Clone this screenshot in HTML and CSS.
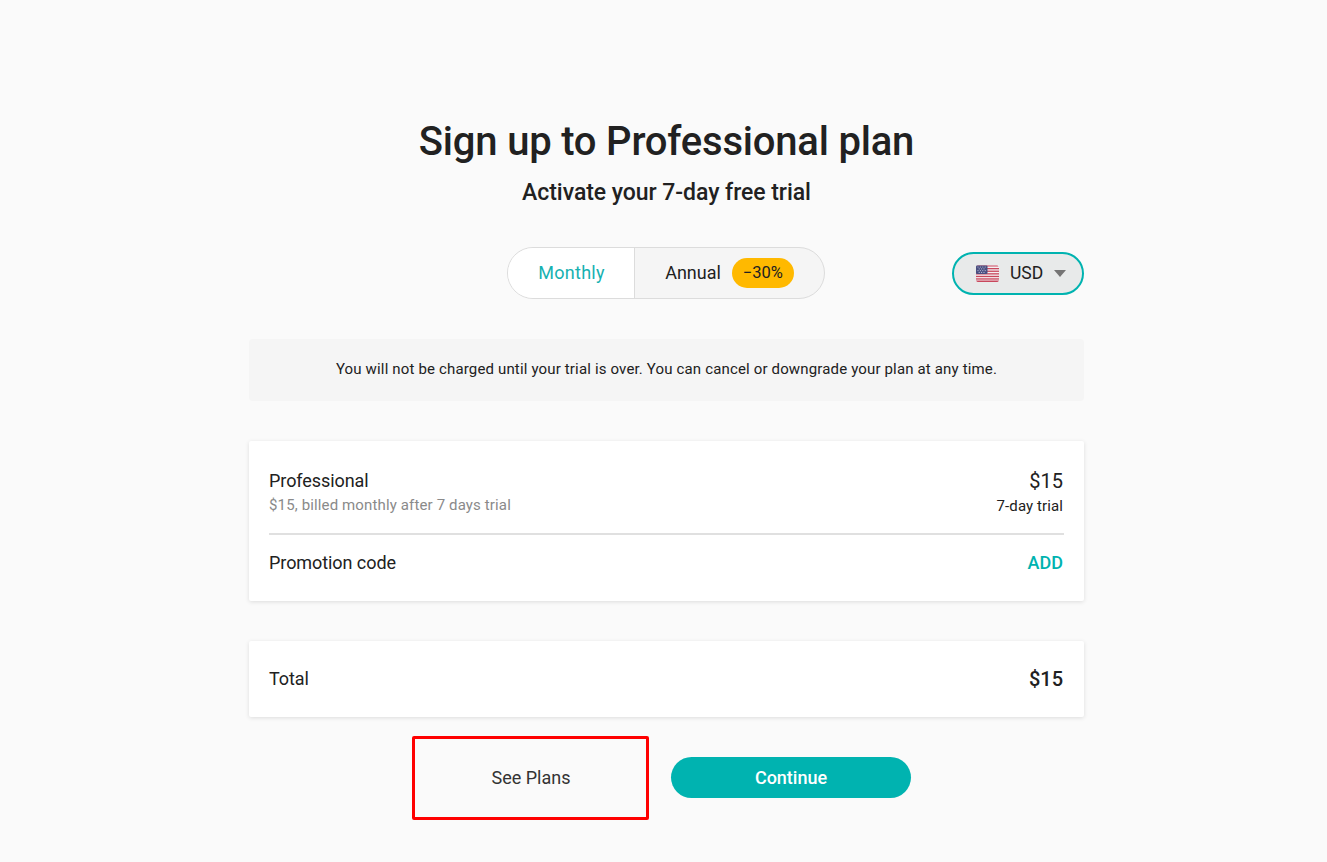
FILE: index.html
```html
<!DOCTYPE html>
<html lang="en">
<head>
<meta charset="utf-8">
<title>Sign up to Professional plan</title>
<link rel="stylesheet" href="styles.css">
</head>
<body>
<main class="page">
  <h1 class="title">Sign up to Professional plan</h1>
  <p class="subtitle">Activate your 7-day free trial</p>
  <div class="controls">
    <div class="billing">
      <div class="billing-option is-active">Monthly</div>
      <div class="billing-option">Annual <span class="discount">−30%</span></div>
    </div>
    <div class="currency">
      <svg class="flag" viewBox="0 0 23 17" width="23" height="17" aria-hidden="true">
        <rect width="23" height="17" rx="2" fill="#f4f0f2"/>
        <path d="M2 .6h19a2 2 0 0 1 1.6 .9H.4A2 2 0 0 1 2 .6z" fill="#c8475c"/>
        <rect width="23" height="1.3" y="3" fill="#c8475c"/>
        <rect width="23" height="1.3" y="5.6" fill="#c8475c"/>
        <rect width="23" height="1.3" y="8.2" fill="#c8475c"/>
        <rect width="23" height="1.3" y="10.8" fill="#c8475c"/>
        <rect width="23" height="1.3" y="13.3" fill="#c8475c"/>
        <path d="M0 15.6h23a2 2 0 0 1-2 1.4H2a2 2 0 0 1-2-1.4z" fill="#c8475c"/>
        <rect width="11.5" height="8.4" y=".6" rx="1" fill="#4a4f80"/>
        <g fill="#b9bcd6"><circle cx="2" cy="2" r=".6"/><circle cx="4.4" cy="2" r=".6"/><circle cx="6.8" cy="2" r=".6"/><circle cx="9.2" cy="2" r=".6"/><circle cx="3.2" cy="3.8" r=".6"/><circle cx="5.6" cy="3.8" r=".6"/><circle cx="8" cy="3.8" r=".6"/><circle cx="2" cy="5.6" r=".6"/><circle cx="4.4" cy="5.6" r=".6"/><circle cx="6.8" cy="5.6" r=".6"/><circle cx="9.2" cy="5.6" r=".6"/><circle cx="3.2" cy="7.4" r=".6"/><circle cx="5.6" cy="7.4" r=".6"/><circle cx="8" cy="7.4" r=".6"/></g>
      </svg>
      <span class="currency-code">USD</span>
      <span class="caret"></span>
    </div>
  </div>
  <div class="notice">You will not be charged until your trial is over. You can cancel or downgrade your plan at any time.</div>
  <section class="card card-plan">
    <div class="row plan-row">
      <div>
        <div class="row-label">Professional</div>
        <div class="row-note">$15, billed monthly after 7 days trial</div>
      </div>
      <div class="plan-price">
        <div class="price">$15</div>
        <div class="trial">7-day trial</div>
      </div>
    </div>
    <div class="row promo-row">
      <div class="row-label">Promotion code</div>
      <div class="add">ADD</div>
    </div>
  </section>
  <section class="card card-total">
    <div class="row total-row">
      <div class="row-label">Total</div>
      <div class="total-price">$15</div>
    </div>
  </section>
  <div class="actions">
    <button class="see-plans" type="button">See Plans</button>
    <button class="continue" type="button">Continue</button>
  </div>
</main>
</body>
</html>
```
FILE: styles.css
```css
* { box-sizing: border-box; }
html, body { margin: 0; padding: 0; }
body {
  background: #fafafa;
  color: #212121;
  font-family: Roboto, "Liberation Sans", sans-serif;
  min-height: 862px;
}
.page {
  width: 835px;
  margin-left: 249px;
  padding-top: 118px;
  display: flex;
  flex-direction: column;
}
.title {
  margin: 0;
  font-size: 40px;
  line-height: 48px;
  font-weight: 500;
  letter-spacing: -.2px;
  text-align: center;
}
.subtitle {
  margin: 11px 0 0;
  font-size: 23px;
  line-height: 32px;
  font-weight: 500;
  letter-spacing: -.05px;
  text-align: center;
}
.controls {
  position: relative;
  margin-top: 38px;
  display: flex;
  justify-content: center;
  height: 52px;
}
.billing {
  width: 318px;
  height: 52px;
  margin-right: 2px;
  display: flex;
  border: 1px solid #dcdcdc;
  border-radius: 26px;
  overflow: hidden;
  background: #f5f5f5;
  font-size: 18px;
}
.billing-option {
  display: flex;
  align-items: center;
  justify-content: center;
  flex: 1;
  gap: 11px;
  padding: 0 0 2px 1px;
}
.billing-option.is-active {
  flex: 0 0 127px;
  padding-left: 2px;
  background: #fff;
  color: #16b1b1;
  border-right: 1px solid #dcdcdc;
  letter-spacing: .3px;
}
.discount {
  display: inline-block;
  width: 62px;
  height: 30px;
  margin-top: 2px;
  line-height: 30px;
  border-radius: 15px;
  background: #ffb900;
  text-align: center;
  font-size: 16.5px;
}
.currency {
  position: absolute;
  right: 0;
  top: 5px;
  width: 132px;
  height: 43px;
  border: 2px solid #00b3b0;
  border-radius: 22px;
  background: #e8eaea;
  display: flex;
  align-items: center;
  padding-left: 22px;
  font-size: 17.5px;
}
.flag { flex: none; }
.currency-code { margin-left: 11px; padding-bottom: 2px; }
.caret {
  margin-left: 11px;
  width: 0;
  height: 0;
  border-left: 6.5px solid transparent;
  border-right: 6.5px solid transparent;
  border-top: 7px solid #757575;
}
.notice {
  margin-top: 40px;
  height: 62px;
  padding-bottom: 2px;
  background: #f5f5f5;
  border-radius: 4px;
  display: flex;
  align-items: center;
  justify-content: center;
  font-size: 15px;
  letter-spacing: .155px;
}
.card {
  background: #fff;
  border-radius: 2px;
  box-shadow: 0 1px 4px rgba(0, 0, 0, .12);
  padding: 0 20px;
}
.card-plan { margin-top: 40px; height: 160px; }
.card-total { margin-top: 40px; height: 76px; }
.row {
  display: flex;
  justify-content: space-between;
  align-items: center;
}
.plan-row {
  height: 94px;
  align-items: flex-start;
  padding-top: 28px;
  border-bottom: 2px solid #e0e0e0;
}
.promo-row { height: 58px; padding-bottom: 2px; }
.total-row { height: 76px; }
.row-label { font-size: 18px; line-height: 24px; letter-spacing: -.07px; }
.row-note {
  font-size: 15px;
  line-height: 20px;
  color: #8a8a8a;
  letter-spacing: .135px;
  margin-top: 2px;
}
.plan-price { text-align: right; padding-right: 1px; }
.price { font-size: 20px; line-height: 24px; }
.trial { font-size: 15px; line-height: 20px; margin-top: 3px; letter-spacing: .1px; }
.add { font-size: 18px; line-height: 24px; font-weight: 500; color: #00b3b0; padding-right: 1px; }
.total-price { font-size: 20px; font-weight: 500; padding-right: 1px; }
.actions {
  margin-top: 19px;
  display: flex;
  align-items: flex-start;
  margin-left: 163px;
  gap: 22px;
}
.see-plans {
  width: 237px;
  height: 84px;
  border: 3px solid #f00;
  border-radius: 2px;
  background: transparent;
  color: #333;
  font: 400 18px Roboto, "Liberation Sans", sans-serif;
  padding: 0 0 2px 1px;
}
.continue {
  width: 240px;
  height: 41px;
  margin-top: 21px;
  border: 0;
  border-radius: 21px;
  background: #00b3b0;
  color: #fff;
  font: 500 18px Roboto, "Liberation Sans", sans-serif;
  padding: 0;
}
```
